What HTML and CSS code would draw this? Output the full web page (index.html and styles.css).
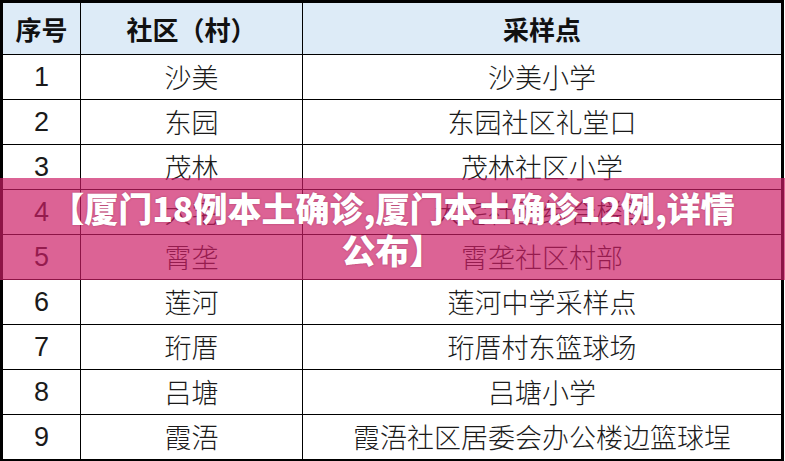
FILE: index.html
```html
<!DOCTYPE html>
<html lang="zh-CN">
<head>
<meta charset="utf-8">
<title>厦门本土确诊</title>
<link rel="stylesheet" href="styles.css">
</head>
<body>
<div class="page">
  <table class="sheet">
    <colgroup>
      <col class="c1"><col class="c2"><col class="c3">
    </colgroup>
    <thead>
      <tr class="head"><th>序号</th><th>社区（村）</th><th>采样点</th></tr>
    </thead>
    <tbody>
      <tr><td class="num">1</td><td>沙美</td><td>沙美小学</td></tr>
      <tr><td class="num">2</td><td>东园</td><td>东园社区礼堂口</td></tr>
      <tr><td class="num">3</td><td>茂林</td><td>茂林社区小学</td></tr>
      <tr><td class="num">4</td><td>大宅</td><td>大宅社区综合楼前</td></tr>
      <tr><td class="num">5</td><td>霄垄</td><td>霄垄社区村部</td></tr>
      <tr><td class="num">6</td><td>莲河</td><td>莲河中学采样点</td></tr>
      <tr><td class="num">7</td><td>珩厝</td><td>珩厝村东篮球场</td></tr>
      <tr><td class="num">8</td><td>吕塘</td><td>吕塘小学</td></tr>
      <tr><td class="num">9</td><td>霞浯</td><td>霞浯社区居委会办公楼边篮球埕</td></tr>
    </tbody>
  </table>
  <div class="banner">
    <p class="title">【厦门18例本土确诊,厦门本土确诊12例,详情<br>公布】</p>
  </div>
</div>
</body>
</html>
```
FILE: styles.css
```css
html, body {
  margin: 0;
  padding: 0;
  background: #ffffff;
}
.page {
  position: relative;
  width: 785px;
  height: 461px;
  overflow: hidden;
}
.sheet {
  border-collapse: collapse;
  width: 784px;
  table-layout: fixed;
  border: 3px solid #000;
  font-family: "Noto Sans CJK SC", sans-serif;
  color: #111;
}
.c1 { width: 79px; }
.c2 { width: 222px; }
.c3 { width: auto; }
.sheet th, .sheet td {
  border: 1px solid #000;
  text-align: center;
  padding: 0;
  font-size: 27px;
  line-height: 30px;
}
.head th {
  background: #ddebf7;
  height: 51px;
  font-weight: 700;
  font-size: 26px;
}
.sheet td {
  height: 44px;
  font-weight: 300;
  color: #1a1a1a;
}
.sheet td.num {
  font-family: "Liberation Sans", Arial, sans-serif;
  font-weight: 400;
  font-size: 27px;
}
.banner {
  position: absolute;
  left: 0;
  top: 178px;
  width: 785px;
  height: 102px;
  background: rgba(204, 29, 102, 0.69);
  display: flex;
  align-items: center;
  justify-content: center;
}
.title {
  margin: 0;
  color: #ffffff;
  font-family: "Noto Sans CJK SC", sans-serif;
  font-weight: 900;
  font-size: 34px;
  line-height: 42px;
  text-align: center;
  text-shadow: 0 0 2px rgba(120, 20, 60, 0.5);
}
```
